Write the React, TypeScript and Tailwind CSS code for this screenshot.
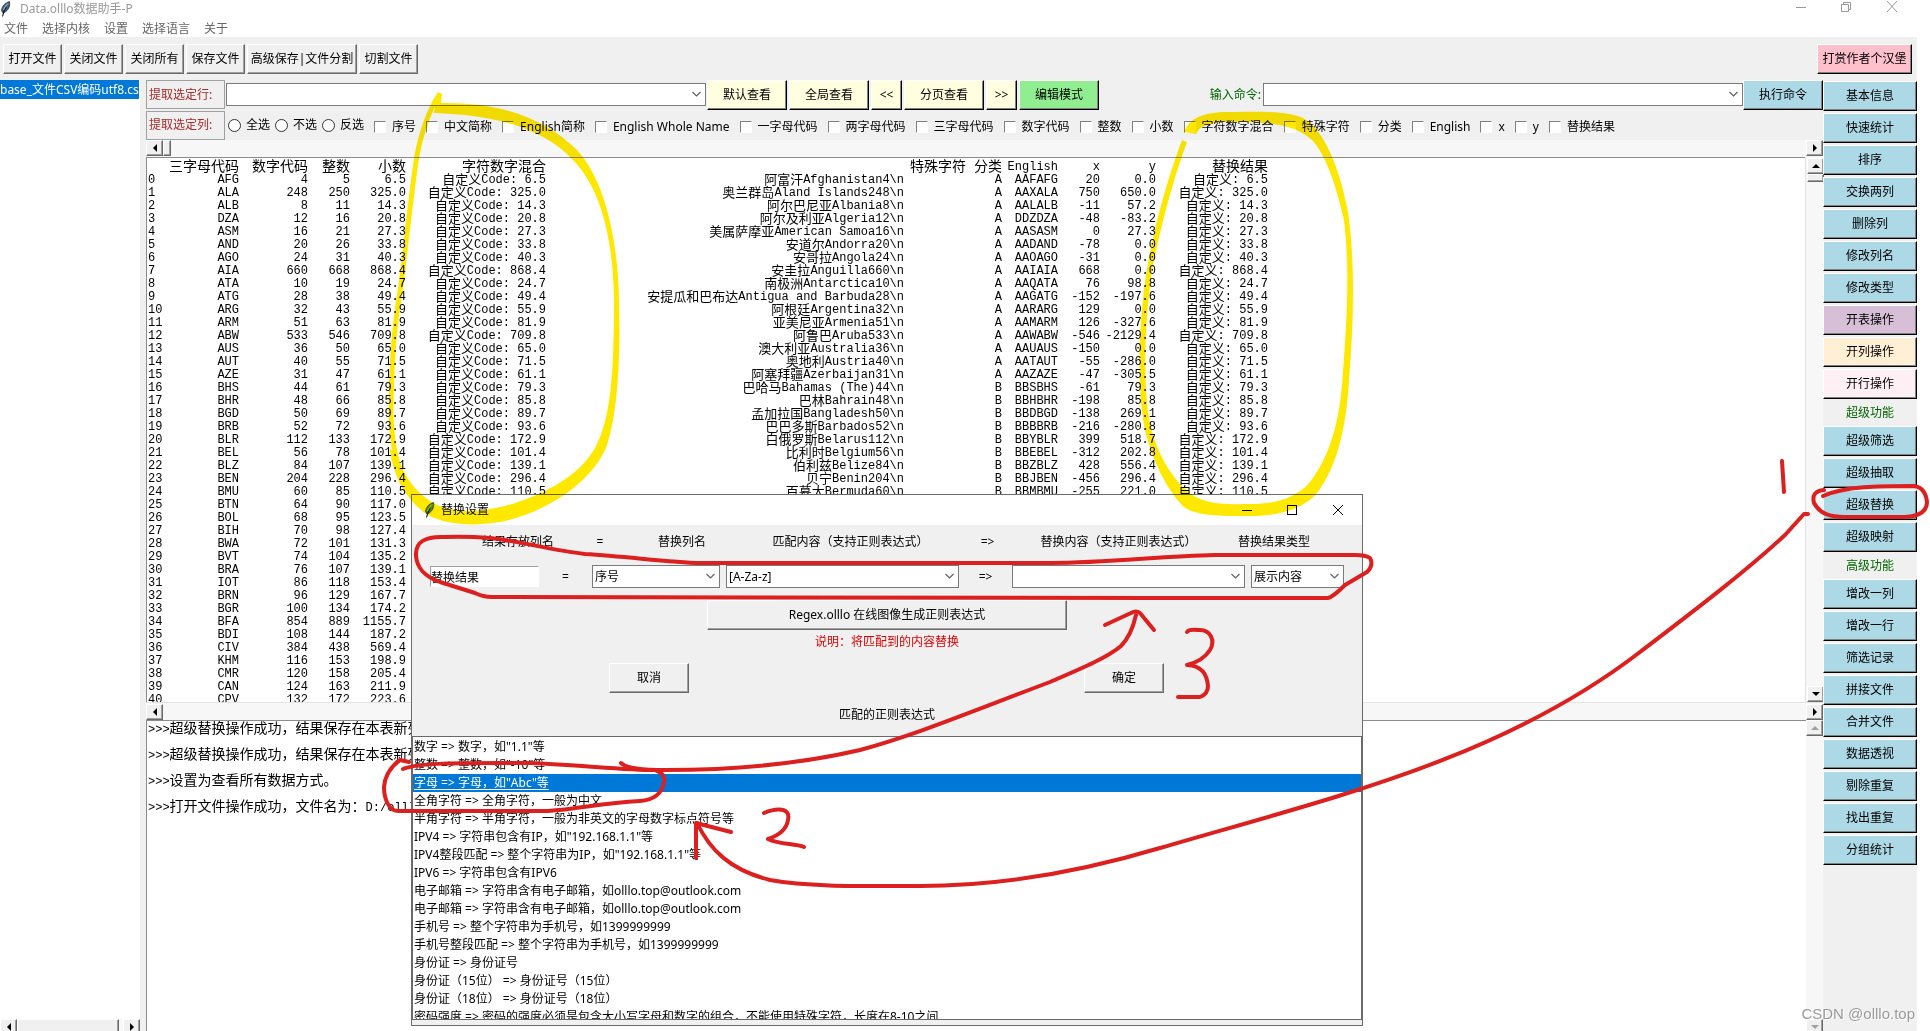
import type { ReactNode } from "react";
import { clsx } from "clsx";

type Row = [string, string, string, string, string?, string?, string?, string?, string?];

const rows: Row[] = [
  ["AFG", "4", "5", "6.5", "阿富汗Afghanistan4\\n", "A", "AAFAFG", "20", "0.0"],
  ["ALA", "248", "250", "325.0", "奥兰群岛Aland Islands248\\n", "A", "AAXALA", "750", "650.0"],
  ["ALB", "8", "11", "14.3", "阿尔巴尼亚Albania8\\n", "A", "AALALB", "-11", "57.2"],
  ["DZA", "12", "16", "20.8", "阿尔及利亚Algeria12\\n", "A", "DDZDZA", "-48", "-83.2"],
  ["ASM", "16", "21", "27.3", "美属萨摩亚American Samoa16\\n", "A", "AASASM", "0", "27.3"],
  ["AND", "20", "26", "33.8", "安道尔Andorra20\\n", "A", "AADAND", "-78", "0.0"],
  ["AGO", "24", "31", "40.3", "安哥拉Angola24\\n", "A", "AAOAGO", "-31", "0.0"],
  ["AIA", "660", "668", "868.4", "安圭拉Anguilla660\\n", "A", "AAIAIA", "668", "0.0"],
  ["ATA", "10", "19", "24.7", "南极洲Antarctica10\\n", "A", "AAQATA", "76", "98.8"],
  ["ATG", "28", "38", "49.4", "安提瓜和巴布达Antigua and Barbuda28\\n", "A", "AAGATG", "-152", "-197.6"],
  ["ARG", "32", "43", "55.9", "阿根廷Argentina32\\n", "A", "AARARG", "129", "0.0"],
  ["ARM", "51", "63", "81.9", "亚美尼亚Armenia51\\n", "A", "AAMARM", "126", "-327.6"],
  ["ABW", "533", "546", "709.8", "阿鲁巴Aruba533\\n", "A", "AAWABW", "-546", "-2129.4"],
  ["AUS", "36", "50", "65.0", "澳大利亚Australia36\\n", "A", "AAUAUS", "-150", "0.0"],
  ["AUT", "40", "55", "71.5", "奥地利Austria40\\n", "A", "AATAUT", "-55", "-286.0"],
  ["AZE", "31", "47", "61.1", "阿塞拜疆Azerbaijan31\\n", "A", "AAZAZE", "-47", "-305.5"],
  ["BHS", "44", "61", "79.3", "巴哈马Bahamas (The)44\\n", "B", "BBSBHS", "-61", "79.3"],
  ["BHR", "48", "66", "85.8", "巴林Bahrain48\\n", "B", "BBHBHR", "-198", "85.8"],
  ["BGD", "50", "69", "89.7", "孟加拉国Bangladesh50\\n", "B", "BBDBGD", "-138", "269.1"],
  ["BRB", "52", "72", "93.6", "巴巴多斯Barbados52\\n", "B", "BBBBRB", "-216", "-280.8"],
  ["BLR", "112", "133", "172.9", "白俄罗斯Belarus112\\n", "B", "BBYBLR", "399", "518.7"],
  ["BEL", "56", "78", "101.4", "比利时Belgium56\\n", "B", "BBEBEL", "-312", "202.8"],
  ["BLZ", "84", "107", "139.1", "伯利兹Belize84\\n", "B", "BBZBLZ", "428", "556.4"],
  ["BEN", "204", "228", "296.4", "贝宁Benin204\\n", "B", "BBJBEN", "-456", "296.4"],
  ["BMU", "60", "85", "110.5", "百慕大Bermuda60\\n", "B", "BBMBMU", "-255", "221.0"],
  ["BTN", "64", "90", "117.0"],
  ["BOL", "68", "95", "123.5"],
  ["BIH", "70", "98", "127.4"],
  ["BWA", "72", "101", "131.3"],
  ["BVT", "74", "104", "135.2"],
  ["BRA", "76", "107", "139.1"],
  ["IOT", "86", "118", "153.4"],
  ["BRN", "96", "129", "167.7"],
  ["BGR", "100", "134", "174.2"],
  ["BFA", "854", "889", "1155.7"],
  ["BDI", "108", "144", "187.2"],
  ["CIV", "384", "438", "569.4"],
  ["KHM", "116", "153", "198.9"],
  ["CMR", "120", "158", "205.4"],
  ["CAN", "124", "163", "211.9"],
  ["CPV", "132", "172", "223.6"],
];

const headers = ["三字母代码", "数字代码", "整数", "小数", "字符数字混合", "特殊字符", "分类", "English", "x", "y", "替换结果"];

const columns = [
  "序号", "中文简称", "English简称", "English Whole Name", "一字母代码", "两字母代码", "三字母代码", "数字代码",
  "整数", "小数", "字符数字混合", "特殊字符", "分类", "English", "x", "y", "替换结果",
];

const logs = [
  ">>>超级替换操作成功，结果保存在本表新列",
  ">>>超级替换操作成功，结果保存在本表新列",
  ">>>设置为查看所有数据方式。",
  ">>>打开文件操作成功，文件名为：D:/olll",
];

const patterns = [
  '数字 => 数字，如"1.1"等',
  '整数 => 整数，如"-10"等',
  '字母 => 字母，如"Abc"等',
  "全角字符 => 全角字符，一般为中文",
  "半角字符 => 半角字符，一般为非英文的字母数字标点符号等",
  'IPV4 => 字符串包含有IP，如"192.168.1.1"等',
  'IPV4整段匹配 => 整个字符串为IP，如"192.168.1.1"等',
  "IPV6 => 字符串包含有IPV6",
  "电子邮箱 => 字符串含有电子邮箱，如olllo.top@outlook.com",
  "电子邮箱 => 字符串含有电子邮箱，如olllo.top@outlook.com",
  "手机号 => 整个字符串为手机号，如1399999999",
  "手机号整段匹配 => 整个字符串为手机号，如1399999999",
  "身份证 => 身份证号",
  "身份证（15位） => 身份证号（15位）",
  "身份证（18位） => 身份证号（18位）",
  "密码强度 => 密码的强度必须是包含大小写字母和数字的组合，不能使用特殊字符，长度在8-10之间",
];

const sideButtons: { label: string; color?: string; heading?: boolean }[] = [
  { label: "基本信息" },
  { label: "快速统计" },
  { label: "排序" },
  { label: "交换两列" },
  { label: "删除列" },
  { label: "修改列名" },
  { label: "修改类型" },
  { label: "开表操作", color: "bg-[#d8bfd8]" },
  { label: "开列操作", color: "bg-[#ffefd5]" },
  { label: "开行操作", color: "bg-[#fff0f5]" },
  { label: "超级功能", heading: true },
  { label: "超级筛选" },
  { label: "超级抽取" },
  { label: "超级替换" },
  { label: "超级映射" },
  { label: "高级功能", heading: true },
  { label: "增改一列" },
  { label: "增改一行" },
  { label: "筛选记录" },
  { label: "拼接文件" },
  { label: "合并文件" },
  { label: "数据透视" },
  { label: "剔除重复" },
  { label: "找出重复" },
  { label: "分组统计" },
];

const BevelButton = ({ children, className }: { children: ReactNode; className?: string }) => (
  <button
    className={clsx(
      "h-[30px] shrink-0 border border-t-white border-l-white text-center whitespace-nowrap",
      className
    )}
  >
    {children}
  </button>
);

const dark = "border-r-black border-b-black shadow-[inset_-1px_-1px_0_#808080]";
const soft = "bg-[#f0f0f0] border-r-[#696969] border-b-[#696969] shadow-[inset_-1px_-1px_0_#a0a0a0]";

const Combo = ({ label, value = "", className }: { label: string; value?: string; className?: string }) => (
  <div className={clsx("relative h-[23px] shrink-0", className)}>
    <select
      aria-label={label}
      className="w-full h-full appearance-none bg-white border border-[#7a7a7a] pl-[2px] pr-5 outline-none"
    >
      <option>{value}</option>
    </select>
    <svg className="absolute right-[5px] top-[8px] pointer-events-none" width="9" height="7" viewBox="0 0 9 7">
      <path d="M0.5 1 L4.5 5 L8.5 1" fill="none" stroke="#606060" strokeWidth="1.2" />
    </svg>
  </div>
);

const arrows = {
  left: "M10 4 V12 L6 8 Z",
  right: "M6 4 V12 L10 8 Z",
  up: "M4 10 H12 L8 6 Z",
  down: "M4 6 H12 L8 10 Z",
};

const ScrollArrow = ({ dir, disabled }: { dir: keyof typeof arrows; disabled?: boolean }) => (
  <button
    aria-label={dir}
    disabled={disabled}
    className={clsx("w-[17px] h-4 shrink-0 border border-t-white border-l-white flex items-center justify-center", soft)}
  >
    <svg width="16" height="16" viewBox="0 0 16 16" className="shrink-0">
      <path d={arrows[dir]} fill={disabled ? "#a0a0a0" : "#000"} />
    </svg>
  </button>
);

const Thumb = ({ className }: { className: string }) => (
  <div className={clsx("shrink-0 border border-t-white border-l-white", soft, className)} />
);

const cjk = /([\u3000-\u9fff\uff00-\uffef]+)/;

// the fixed-width panes draw Chinese characters two cells wide
const Mono = ({ text, wide }: { text: string; wide?: boolean }) => (
  <>
    {text.split(cjk).map((part, i) =>
      cjk.test(part) ? (
        <span key={i} className={wide ? "text-[14px]" : "text-[13px]"}>
          {part}
        </span>
      ) : (
        part
      )
    )}
  </>
);

const Feather = ({ color }: { color: string }) => (
  <svg width="11" height="16" viewBox="0 0 11 16" className="shrink-0">
    <path d="M9.5 0.5 C5 2 2 5 1.5 9.5 L3 12 C7.5 10.5 10.5 6 9.5 0.5 Z" fill={color} stroke="#1c1c1c" strokeWidth="0.7" />
    <path d="M6 6 C4.5 9 3.5 11 2.5 15.5" fill="none" stroke="#111" strokeWidth="1.1" />
    <path d="M8 2.5 C6 4.5 4.5 6.5 3.5 9" fill="none" stroke="#e8efe8" strokeWidth="0.8" />
  </svg>
);

const DataTable = () => (
  <table className="table-fixed w-[1120px] border-collapse leading-[13px] font-['Liberation_Mono','Noto_Sans_CJK_SC',monospace]">
    <colgroup>
      <col className="w-[20px]" />
      <col className="w-[71px]" />
      <col className="w-[69px]" />
      <col className="w-[42px]" />
      <col className="w-[56px]" />
      <col className="w-[140px]" />
      <col className="w-[420px]" />
      <col className="w-[36px]" />
      <col className="w-[56px]" />
      <col className="w-[42px]" />
      <col className="w-[56px]" />
      <col className="w-[112px]" />
    </colgroup>
    <thead>
      <tr className="h-[14px]">
        <th></th>
        {headers.map((header) => (
          <th key={header} className="p-0 font-normal text-right whitespace-nowrap">
            <span className="flex justify-end h-[14px] leading-[14px]">
              <Mono text={header} wide />
            </span>
          </th>
        ))}
      </tr>
    </thead>
    <tbody>
      {rows.map((row, index) => {
        const [code, num, int, dec, name, kind, english, x, y] = row;
        const cells = [code, num, int, dec, name && `自定义Code: ${dec}`, name, kind, english, x, y, name && `自定义: ${dec}`];
        return (
          <tr key={code}>
            <td className="p-0 h-[13px]">{index}</td>
            {cells.map((cell, i) => (
              <td key={i} className="p-0 text-right">
                <div className={clsx("flex justify-end h-[13px] whitespace-pre", i === 5 && "pr-[62px]")}>
                  <Mono text={cell ?? ""} />
                </div>
              </td>
            ))}
          </tr>
        );
      })}
    </tbody>
  </table>
);

const ReplaceDialog = () => (
  <div
    role="dialog"
    aria-label="替换设置"
    className="absolute left-[411px] top-[494px] w-[952px] h-[532px] flex flex-col bg-[#f0f0f0] border border-[#6b6b6b]"
  >
    <div className="h-[30px] shrink-0 bg-white flex items-center pl-3 pr-[18px]">
      <Feather color="#4f9a35" />
      <span className="ml-[6px] grow">替换设置</span>
      <svg width="102" height="12" viewBox="0 0 102 12" fill="none" stroke="#000">
        <path d="M0 6.5 H10" />
        <rect x="45.5" y="1.5" width="9" height="9" />
        <path d="M91 1 L101 11 M101 1 L91 11" />
      </svg>
    </div>
    <div className="flex ml-[34px] mt-[8px] h-[18px] leading-[18px] text-center whitespace-nowrap">
      <span className="w-[144px]">结果存放列名</span>
      <span className="w-[20px]">=</span>
      <span className="w-[144px]">替换列名</span>
      <span className="w-[193px]">匹配内容（支持正则表达式）</span>
      <span className="w-[81px]">=&gt;</span>
      <span className="w-[181px]">替换内容（支持正则表达式）</span>
      <span className="w-[130px]">替换结果类型</span>
    </div>
    <div className="flex items-center ml-[18px] mt-[14px] text-center">
      <input
        aria-label="结果存放列名"
        defaultValue="替换结果"
        className="w-[109px] h-[21px] bg-white border border-t-[#a0a0a0] border-l-[#a0a0a0] border-b-white border-r-white outline-none"
      />
      <span className="w-[53px]">=</span>
      <Combo label="替换列名" value="序号" className="w-[128px]" />
      <Combo label="匹配内容" value="[A-Za-z]" className="w-[233px] ml-[6px]" />
      <span className="w-[53px]">=&gt;</span>
      <Combo label="替换内容" className="w-[233px]" />
      <Combo label="替换结果类型" value="展示内容" className="w-[93px] ml-[6px]" />
    </div>
    <BevelButton className={clsx(soft, "w-[360px] self-center mt-[12px]")}>Regex.olllo 在线图像生成正则表达式</BevelButton>
    <p className="text-center text-[#e00000] leading-[18px] mt-[3px]">说明：将匹配到的内容替换</p>
    <div className="flex justify-between mt-[12px] pl-[197px] pr-[198px]">
      <BevelButton className={clsx(soft, "w-[80px]")}>取消</BevelButton>
      <BevelButton className={clsx(soft, "w-[80px]")}>确定</BevelButton>
    </div>
    <p className="text-center leading-[18px] mt-[13px]">匹配的正则表达式</p>
    <ul className="grow min-h-0 overflow-hidden bg-white border border-[#696969] mt-[12px] mb-[5px] pt-px leading-[18px] whitespace-nowrap">
      {patterns.map((pattern, i) => (
        <li key={i} className={clsx("h-[18px] pl-px", i === 2 && "bg-[#0078d7] text-white underline underline-offset-2")}>
          {pattern}
        </li>
      ))}
    </ul>
  </div>
);

const Marks = () => (
  <>
    <svg className="absolute left-0 top-0 pointer-events-none mix-blend-multiply" width="1930" height="1031" viewBox="0 0 1930 1031">
      <g fill="none" stroke="#ffe800" strokeLinecap="round" strokeLinejoin="round">
        <path strokeWidth="5" d="M439 95 C428 112 421 135 417 155 C411 195 407 235 401 285 C394 325 391 375 391 415 C392 450 398 475 412 492" />
      </g>
      <g fill="#ffe800">
        <path d="M437 93 L442 94 L441 103 C500 102 545 118 577 150 C605 180 618 240 619 300 C621 370 616 420 606 448 C590 484 545 513 500 522 C470 527 445 524 428 515 C405 500 393 475 390 450 L395 448 C402 475 415 492 435 504 C455 514 480 512 505 506 C545 495 580 475 595 448 C610 420 614 380 614 300 C613 240 602 190 573 160 C545 130 500 115 434 113 Z" />
        <path d="M1184 132 C1190 117 1205 111 1235 112 C1265 111 1290 112 1303 118 C1325 130 1340 170 1348 212 C1355 260 1354 320 1349 380 C1346 430 1337 465 1318 492 C1300 513 1270 517 1240 516 C1215 516 1195 515 1184 507 C1168 492 1152 460 1145 430 C1137 390 1138 330 1146 275 C1153 230 1167 180 1182 140 L1187 142 C1173 180 1161 225 1152 270 C1144 330 1143 385 1150 425 C1158 455 1170 475 1186 490 C1200 503 1220 505 1245 504 C1270 505 1295 500 1310 482 C1327 460 1338 430 1342 385 C1347 320 1350 270 1344 220 C1336 185 1326 155 1312 140 C1297 126 1275 122 1240 122 C1215 121 1200 124 1196 134 Z" />
      </g>
    </svg>
    <svg className="absolute left-0 top-0 pointer-events-none" width="1930" height="1031" viewBox="0 0 1930 1031">
      <g fill="none" stroke="#dc2020" strokeWidth="4" strokeLinecap="round" strokeLinejoin="round">
        <path d="M445 537 C425 536 415 542 416 556 C417 568 424 576 440 582 L475 593 Q483 597 492 597 L1150 598 H1328 Q1333 597 1345 585 L1367 572 Q1374 565 1370 558 Q1366 555 1355 555 H1215 C1160 556 1110 563 1050 563 H700 C670 562 630 557 585 554 C550 550 520 541 490 538 Q465 536 445 537" />
        <path d="M403 769 C420 762 470 763 530 763 C580 765 625 770 655 770 Q665 773 664 782 C662 793 655 800 640 801 C600 803 580 809 548 811 H398 C388 811 384 797 384 787 C385 774 393 765 400 760 L409 762" />
        <path d="M621 763 C626 768 640 770 665 770 C740 770 800 764 860 750 C915 735 960 716 1050 682 C1085 667 1108 657 1121 646 C1129 638 1133 628 1136 615" />
        <path d="M1105 625 L1131 613 Q1136 610 1140 613 L1154 630" />
        <path d="M1187 632 Q1189 629 1198 630 C1212 629 1215 642 1210 650 Q1203 661 1187 665 C1203 666 1207 675 1208 686 Q1208 694 1200 697 L1178 697" />
        <path d="M764 813 C776 808 791 807 788 820 Q786 833 768 839 C780 845 795 843 804 847" />
        <path d="M697 823 C710 850 730 870 770 880 C810 887 860 886 920 886 C1000 886 1080 872 1160 848 C1330 798 1500 760 1640 652 C1695 610 1745 572 1785 535 Q1795 524 1804 514 H1808" />
        <path d="M696 858 L696 823 L731 832" />
        <path d="M1782 461 L1784 492" />
        <path d="M1824 490 C1815 491 1812 495 1814 503 C1820 514 1830 517 1845 517 H1905 C1922 516 1927 510 1927 502 C1926 493 1922 487 1914 486 C1880 486 1845 486 1823 496" />
      </g>
    </svg>
  </>
);

const LineLabel = ({ children }: { children: ReactNode }) => (
  <div className="w-[79px] h-[29px] shrink-0 border border-[#a0a0a0] text-[#a52a2a] flex items-center pl-[2px] whitespace-nowrap">
    {children}
  </div>
);

export default function App() {
  return (
    <div className="relative h-screen min-h-[1031px] overflow-hidden flex flex-col bg-white pr-[13px] text-black text-[12px] leading-[16px] font-['Noto_Sans','Noto_Sans_CJK_SC',sans-serif]">
      <header className="h-[37px] shrink-0 flex justify-between text-[#808080]">
        <div>
          <div className="h-[18px] flex items-center gap-[9px] text-[#999999]">
            <Feather color="#3c6187" />
            <h1>Data.olllo数据助手-P</h1>
          </div>
          <nav className="flex gap-[14px] pl-1 pt-[3px] text-[#666666]">
            {["文件", "选择内核", "设置", "选择语言", "关于"].map((item) => (
              <button key={item}>{item}</button>
            ))}
          </nav>
        </div>
        <svg width="102" height="14" viewBox="0 0 102 14" fill="none" stroke="#999" className="mr-[19px]">
          <path d="M0 7.5 H10" />
          <path d="M45.5 4.5 H52.5 V11.5 H45.5 Z M47.5 4.5 V2.5 H54.5 V9.5 H52.5" />
          <path d="M91 1 L101 12 M101 1 L91 12" />
        </svg>
      </header>

      <div className="grow min-h-0 flex flex-col bg-[#f0f0f0]">
        <div className="flex gap-[2px] pl-[3px] pr-[5px] pt-[7px] pb-[6px]">
          {["打开文件", "关闭文件", "关闭所有", "保存文件", "高级保存|文件分割", "切割文件"].map((item) => (
            <BevelButton key={item} className={clsx(soft, item.length > 4 ? "w-[110px]" : "w-[59px]")}>
              {item}
            </BevelButton>
          ))}
          <BevelButton className={clsx(dark, "ml-auto w-[95px] bg-[#ffc0cb]")}>打赏作者个汉堡</BevelButton>
        </div>

        <div className="grow min-h-0 flex">
          <aside className="w-[140px] shrink-0 mr-[6px] bg-white flex flex-col overflow-hidden">
            <div className="h-[19px] mr-px bg-[#0078d7] text-white whitespace-nowrap leading-[19px] overflow-hidden">
              base_文件CSV编码utf8.cs
            </div>
            <div className="mt-auto h-[12px] flex bg-[#f8f8f8] overflow-hidden">
              <ScrollArrow dir="left" />
              <Thumb className="w-[102px] h-4" />
              <span className="grow" />
              <ScrollArrow dir="right" />
            </div>
          </aside>

          <main className="grow min-w-0 flex flex-col">
            <div className="h-[30px] shrink-0 flex items-start">
              <LineLabel>提取选定行:</LineLabel>
              <Combo label="提取选定行" className="w-[480px] ml-px mt-[3px]" />
              <div className="flex gap-[2px] ml-px">
                <BevelButton className={clsx(dark, "w-[80px] bg-[#ffffe0]")}>默认查看</BevelButton>
                <BevelButton className={clsx(dark, "w-[80px] bg-[#ffffe0]")}>全局查看</BevelButton>
                <BevelButton className={clsx(dark, "w-[31px] bg-[#ffffe0]")}>&lt;&lt;</BevelButton>
                <BevelButton className={clsx(dark, "w-[80px] bg-[#ffffe0]")}>分页查看</BevelButton>
                <BevelButton className={clsx(dark, "w-[31px] bg-[#ffffe0]")}>&gt;&gt;</BevelButton>
                <BevelButton className={clsx(dark, "w-[80px] bg-[#90ee90]")}>编辑模式</BevelButton>
              </div>
              <span className="ml-auto mr-[2px] leading-[30px] text-[#006400]">输入命令:</span>
              <Combo label="输入命令" className="w-[480px] mt-[3px]" />
              <BevelButton className={clsx(dark, "w-[80px] bg-[#add8e6]")}>执行命令</BevelButton>
            </div>
            <div className="h-[30px] shrink-0 flex items-center whitespace-nowrap">
              <LineLabel>提取选定列:</LineLabel>
              <div className="flex gap-[5px] ml-[3px]">
                {["全选", "不选", "反选"].map((item) => (
                  <label key={item} className="flex items-center gap-[5px]">
                    <input
                      type="radio"
                      name="pick"
                      className="appearance-none size-[13px] rounded-full border border-[#333333] bg-white"
                    />
                    {item}
                  </label>
                ))}
              </div>
              <div className="flex gap-[10px] ml-[10px] pt-[4px]">
                {columns.map((item) => (
                  <label key={item} className="flex items-center gap-[6px]">
                    <input
                      type="checkbox"
                      className="appearance-none size-[12px] bg-white border border-t-[#808080] border-l-[#808080] border-b-white border-r-white"
                    />
                    {item}
                  </label>
                ))}
              </div>
            </div>

            <div className="h-[17px] shrink-0 flex bg-[#f7f7f7]">
              <ScrollArrow dir="left" />
              <Thumb className="w-[8px] h-4" />
              <span className="grow" />
              <ScrollArrow dir="right" />
            </div>
            <div className="h-[545px] shrink-0 flex">
              <div className="grow min-w-0 overflow-hidden bg-white border-t border-l border-[#8c8c8c] pl-px pt-[2px]">
                <DataTable />
              </div>
              <div className="w-[18px] pl-px pt-px flex flex-col bg-[#f7f7f7] border-l border-[#e3e3e3]">
                <ScrollArrow dir="up" />
                <Thumb className="w-[17px] h-[8px]" />
                <span className="grow" />
                <ScrollArrow dir="down" />
              </div>
            </div>
            <div className="h-[18px] shrink-0 flex items-center bg-[#f7f7f7] border-t border-[#e3e3e3]">
              <ScrollArrow dir="left" />
              <span className="grow" />
              <ScrollArrow dir="right" />
            </div>
            <div className="grow min-h-0 flex overflow-hidden">
              <div className="grow min-w-0 bg-white border-t border-l border-[#8c8c8c] pl-px pt-px font-['Liberation_Mono','Noto_Sans_CJK_SC',monospace]">
                {logs.map((line, i) => (
                  <p key={i} className="h-[26px] leading-[14px] whitespace-nowrap">
                    <Mono text={line} wide />
                  </p>
                ))}
              </div>
              <div className="w-[17px] flex flex-col bg-[#f7f7f7] -mb-1">
                <ScrollArrow dir="up" disabled />
                <span className="grow" />
                <ScrollArrow dir="down" disabled />
              </div>
            </div>
          </main>

          <aside className="w-[94px] shrink-0 flex flex-col pt-px">
            {sideButtons.map(({ label, color, heading }) =>
              heading ? (
                <div key={label} className="h-[25px] leading-[24px] text-center text-[#006400]">
                  {label}
                </div>
              ) : (
                <BevelButton key={label} className={clsx(dark, "mb-[2px]", color ?? "bg-[#add8e6]")}>
                  {label}
                </BevelButton>
              )
            )}
          </aside>
        </div>
      </div>

      <ReplaceDialog />
      <Marks />
      <span className="absolute right-[15px] bottom-[6px] text-[15px] leading-[22px] text-[#9a9a9a] font-['Liberation_Sans',sans-serif] [text-shadow:1px_1px_0_#ffffff]">
        CSDN @olllo.top
      </span>
    </div>
  );
}
